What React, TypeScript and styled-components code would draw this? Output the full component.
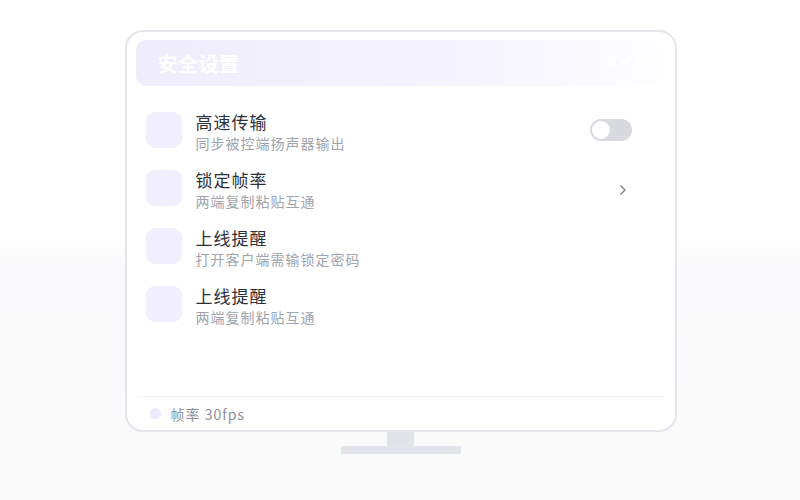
import * as React from "react";
import styled, { createGlobalStyle } from "styled-components";

const GlobalStyle = createGlobalStyle`
    html, body {
        margin: 0;
        padding: 0;
    }
    body {
        width: 800px;
        height: 500px;
        overflow: hidden;
        font-family: "Noto Sans CJK SC", "Noto Sans", sans-serif;
        background: linear-gradient(180deg, #ffffff 0%, #ffffff 46%, #f9f9fb 54%, #fbfbfc 100%);
    }
`;

const Page = styled.div`
    display: flex;
    flex-direction: column;
    align-items: center;
    padding-top: 30px;
    padding-left: 1px;
`;

const Monitor = styled.div`
    box-sizing: border-box;
    width: 552px;
    height: 402px;
    border: 2px solid #e4e6eb;
    border-radius: 18px;
    background: #fff;
    padding: 8px 10px 0 9px;
    display: flex;
    flex-direction: column;
`;

const Header = styled.div`
    height: 46px;
    border-radius: 10px;
    background: linear-gradient(90deg, #efedfc 0%, #f3f2fd 45%, #f8f7fe 75%, #fefeff 100%);
    display: flex;
    align-items: center;
    justify-content: space-between;
    padding: 0 24px 0 22px;
    flex-shrink: 0;
`;

const Title = styled.div`
    color: #fff;
    font-size: 20px;
    font-weight: 700;
    letter-spacing: 0.5px;
`;

const Dots = styled.div`
    display: flex;
    gap: 8px;
`;

const Dot = styled.span`
    width: 6px;
    height: 6px;
    border-radius: 50%;
    background: #fff;
`;

const List = styled.div`
    flex: 1;
    display: flex;
    flex-direction: column;
    gap: 16px;
    margin-top: 25px;
`;

const Row = styled.div`
    display: flex;
    align-items: flex-start;
    height: 42px;
    padding: 0 33px 0 10px;
`;

const IconBox = styled.div`
    width: 36px;
    height: 36px;
    margin-top: 1px;
    border-radius: 9px;
    background: #f1effd;
    flex-shrink: 0;
`;

const Texts = styled.div`
    flex: 1;
    margin-left: 14px;
    display: flex;
    flex-direction: column;
`;

const RowTitle = styled.div`
    font-size: 17px;
    line-height: 22px;
    letter-spacing: 1px;
    color: #2c303a;
`;

const RowSub = styled.div`
    font-size: 14px;
    line-height: 20px;
    letter-spacing: 1px;
    color: #a0a4ad;
`;

const Toggle = styled.div`
    width: 42px;
    height: 22px;
    margin-top: 8px;
    border-radius: 11px;
    background: #d8dae0;
    padding: 2px;
    box-sizing: border-box;
    display: flex;
    align-items: center;
`;

const Knob = styled.span`
    width: 18px;
    height: 18px;
    border-radius: 50%;
    background: #fff;
`;

const Chevron = styled.svg`
    margin-top: 15px;
    margin-right: 5px;
    flex-shrink: 0;
`;

const Footer = styled.div`
    height: 33px;
    border-top: 1px solid #eef0f3;
    display: flex;
    align-items: center;
    padding-left: 13px;
    margin-left: 1px;
    flex-shrink: 0;
`;

const StatusDot = styled.span`
    width: 11px;
    height: 11px;
    border-radius: 50%;
    background: #ece9fc;
`;

const FooterText = styled.span`
    margin-left: 10px;
    font-size: 14px;
    letter-spacing: 1px;
    color: #8d929b;
`;

const Neck = styled.div`
    width: 27px;
    height: 14px;
    background: #e0e3e7;
`;

const Base = styled.div`
    width: 120px;
    height: 8px;
    background: #e2e5e9;
`;

type Item = { title: string; sub: string; action: "toggle" | "chevron" | "none" };

const items: Item[] = [
    { title: "高速传输", sub: "同步被控端扬声器输出", action: "toggle" },
    { title: "锁定帧率", sub: "两端复制粘贴互通", action: "chevron" },
    { title: "上线提醒", sub: "打开客户端需输锁定密码", action: "none" },
    { title: "上线提醒", sub: "两端复制粘贴互通", action: "none" },
];

export default function App() {
    return (
        <>
            <GlobalStyle />
            <Page>
                <Monitor>
                    <Header>
                        <Title>安全设置</Title>
                        <Dots>
                            <Dot />
                            <Dot />
                            <Dot />
                        </Dots>
                    </Header>
                    <List>
                        {items.map((it, i) => (
                            <Row key={i}>
                                <IconBox />
                                <Texts>
                                    <RowTitle>{it.title}</RowTitle>
                                    <RowSub>{it.sub}</RowSub>
                                </Texts>
                                {it.action === "toggle" && (
                                    <Toggle>
                                        <Knob />
                                    </Toggle>
                                )}
                                {it.action === "chevron" && (
                                    <Chevron width="8" height="12" viewBox="0 0 8 12">
                                        <path d="M2 2 L6 6 L2 10" fill="none" stroke="#7a7f88" strokeWidth="1.4" strokeLinecap="round" strokeLinejoin="round" />
                                    </Chevron>
                                )}
                            </Row>
                        ))}
                    </List>
                    <Footer>
                        <StatusDot />
                        <FooterText>帧率 30fps</FooterText>
                    </Footer>
                </Monitor>
                <Neck />
                <Base />
            </Page>
        </>
    );
}
